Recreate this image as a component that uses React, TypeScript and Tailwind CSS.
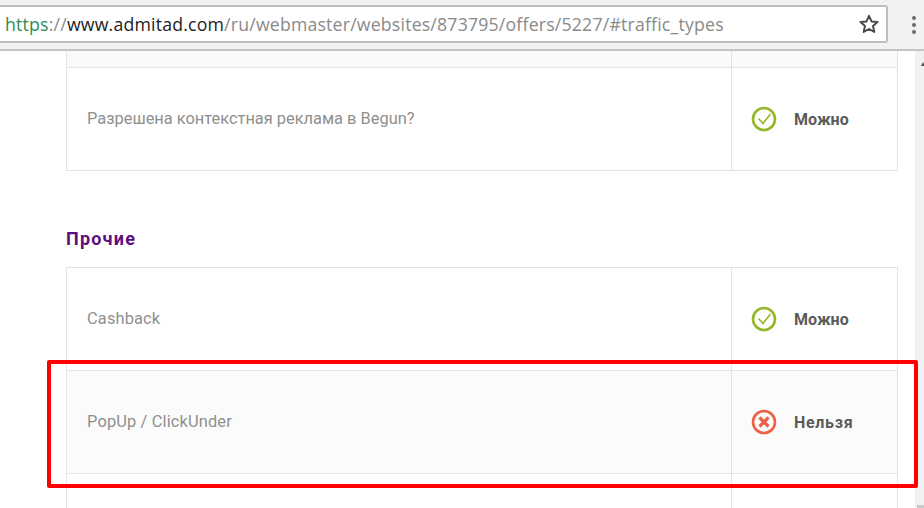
import React from "react";

function OkIcon() {
  return (
    <svg width="26" height="26" viewBox="0 0 26 26" fill="none">
      <circle cx="13" cy="13" r="11" stroke="#94b82a" strokeWidth="2.6" />
      <path d="M7.5 12.5l4.5 5 7.5-9.5" stroke="#94b82a" strokeWidth="1.6" />
    </svg>
  );
}

function NoIcon() {
  return (
    <svg width="26" height="26" viewBox="0 0 26 26" fill="none">
      <circle cx="13" cy="13" r="11" stroke="#ee5f45" strokeWidth="2.6" />
      <path d="M8.5 8.5l9 9M17.5 8.5l-9 9" stroke="#ee5f45" strokeWidth="3.2" />
    </svg>
  );
}

function Row({ label, ok, shaded, last }: { label: string; ok: boolean; shaded?: boolean; last?: boolean }) {
  return (
    <div className={`flex border-[#e3e3e3] ${last ? "h-[102px]" : "h-[103px] border-b"} ${shaded ? "bg-[#fbfbfb]" : "bg-white"}`}>
      <div className={`flex-1 flex items-center pl-[20px] pt-[1px] text-[16.4px] text-[#8f8f8f] ${last ? "" : "tracking-[0.15px]"}`}>{label}</div>
      <div className="w-[166px] shrink-0 border-l border-[#e3e3e3] flex items-center pl-[19px] gap-[17px]">
        {ok ? <OkIcon /> : <NoIcon />}
        <span className={`font-bold text-[16px] text-[#5b5b5b] pt-[1px] ${ok ? "" : "tracking-[0.7px]"}`}>{ok ? "Можно" : "Нельзя"}</span>
      </div>
    </div>
  );
}

export default function App() {
  return (
    <div className="relative w-[924px] h-[508px] overflow-hidden bg-white font-['Roboto','Liberation_Sans',sans-serif]">
      <div className="h-[51px] bg-[#f2f2f2] border-b-2 border-[#c4c4c4] pt-[5px] flex items-start">
        <div className="w-[888px] h-[38px] bg-white border-y-2 border-r-2 border-[#bdbdbd] rounded-r-[3px] flex items-center justify-between pl-[5px] pr-[7px]">
          <div className="font-['Open_Sans','Liberation_Sans',sans-serif] text-[17.7px] whitespace-nowrap tracking-[0.19px]">
            <span className="text-[#2e8b57]">https</span>
            <span className="text-[#8a8a8a]">://</span>
            <span className="text-[#222222]">www.admitad.com</span>
            <span className="text-[#8a8a8a]">/ru/webmaster/websites/873795/offers/5227/#traffic_types</span>
          </div>
          <svg width="20" height="20" viewBox="0 0 20 20" fill="none">
            <path d="M10 1.8l2.5 5.6 6 .6-4.5 4 1.3 6L10 15l-5.3 3 1.3-6-4.5-4 6-.6z" stroke="#4a4a4a" strokeWidth="2" strokeLinejoin="round" />
          </svg>
        </div>
        <div className="ml-[24px] mt-[11px] flex flex-col gap-[3px]">
          <span className="w-[4px] h-[4px] rounded-full bg-[#6a6a6a]" />
          <span className="w-[4px] h-[4px] rounded-full bg-[#6a6a6a]" />
          <span className="w-[4px] h-[4px] rounded-full bg-[#6a6a6a]" />
        </div>
      </div>

      <div className="flex">
        <div className="ml-[66px] w-[832px]">
          <div className="border-x border-b border-[#e3e3e3]">
            <div className="flex h-[17px] bg-[#fafafa] border-b border-[#e3e3e3]">
              <div className="flex-1" />
              <div className="w-[166px] border-l border-[#e3e3e3]" />
            </div>
            <Row label="Разрешена контекстная реклама в Begun?" ok last />
          </div>
          <h3 className="text-[#5c0f7e] font-bold text-[18px] tracking-[1.2px] leading-[20px] mt-[58px] mb-[18px]">Прочие</h3>
          <div className="border-x border-t border-[#e3e3e3]">
            <Row label="Cashback" ok />
            <Row label="PopUp / ClickUnder" ok={false} shaded />
            <div className="flex h-[40px] bg-white">
              <div className="flex-1" />
              <div className="w-[166px] border-l border-[#e3e3e3]" />
            </div>
          </div>
        </div>
        <div className="ml-[17px] w-[9px] h-[457px] bg-[#f1f1f1] relative">
          <svg className="absolute left-[6px] top-[11px]" width="4" height="4" viewBox="0 0 4 4">
            <path d="M2 0L4 4H0z" fill="#555555" />
          </svg>
          <div className="absolute left-[2px] bottom-0 w-[7px] h-[3px] bg-[#c8c8c8]" />
        </div>
      </div>

      <div className="absolute left-[47px] top-[360px] w-[871px] h-[128px] border-[4px] border-[#fe0000] rounded-[2px] pointer-events-none" />
    </div>
  );
}
